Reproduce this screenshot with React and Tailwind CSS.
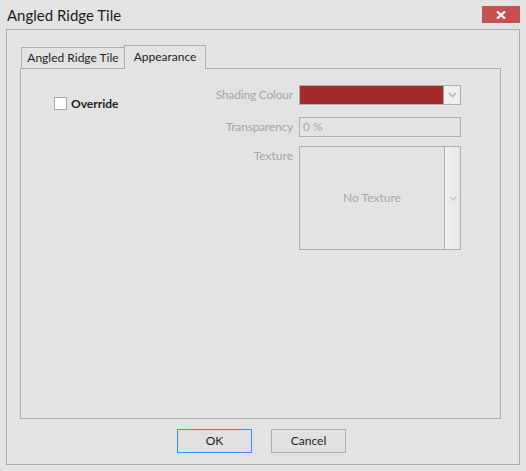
import React from "react";

const font = { fontFamily: 'Lato, "Liberation Sans", sans-serif' };

export default function App() {
  return (
    <div
      className="w-[526px] h-[471px] bg-[#e3e3e3] flex flex-col text-[12px] text-[#1e1e1e] overflow-hidden"
      style={font}
    >
      {/* title bar */}
      <div className="h-[29px] flex items-start justify-between shrink-0">
        <div className="pl-[7px] pt-[5px] text-[15px] leading-[20px] text-[#1a1a1a]">Angled Ridge Tile</div>
        <div className="mt-[6px] mr-[6px] w-[38px] h-[17px] bg-[#c75050] flex items-center justify-center">
          <svg width="10" height="8" viewBox="0 0 10 8">
            <path d="M1 0.5 L9 7.5 M9 0.5 L1 7.5" stroke="#fff" strokeWidth="2.2" />
          </svg>
        </div>
      </div>

      {/* outer frame */}
      <div className="mx-[6px] mb-[6px] flex-1 border border-[#acacac] flex flex-col pl-[13px] pr-[18px] pt-[15px] pb-[11px]">
        {/* tabs */}
        <div className="flex items-end h-[23px] relative z-10">
          <div className="ml-[1px] w-[103px] h-[21px] border border-b-0 border-r-0 border-[#acacac] flex items-center justify-center text-[12px] leading-none">
            Angled Ridge Tile
          </div>
          <div className="w-[82px] h-[24px] -mb-px border border-b-0 border-[#acacac] bg-[#e3e3e3] flex items-center justify-center text-[12px] leading-none pb-[2px]">
            Appearance
          </div>
        </div>
        {/* panel */}
        <div className="flex-1 border border-[#acacac] flex">
          <div className="w-[189px] pl-[33px] pt-[28px]">
            <div className="flex items-center gap-[4px]">
              <div className="w-[13px] h-[13px] border border-[#a8a8a8] bg-white" />
              <span className="font-bold text-[12px] leading-none text-[#222]">Override</span>
            </div>
          </div>
          <div className="pt-[16px] grid grid-cols-[83px_162px] gap-x-[6px] content-start">
            <div className="h-[20px] flex items-center justify-end text-[#a6a6a6] whitespace-nowrap tracking-[-0.2px]">Shading Colour</div>
            <div className="h-[20px] border border-[#acacac] flex">
              <div className="flex-1 bg-[#a52a2a]" />
              <div className="w-[17px] border-l border-[#acacac] bg-[#efefef] flex items-center justify-center">
                <svg width="9" height="6" viewBox="0 0 9 6">
                  <path d="M1 1 L4.5 4.5 L8 1" stroke="#b5b5b5" strokeWidth="1.6" fill="none" />
                </svg>
              </div>
            </div>

            <div className="mt-[12px] h-[20px] flex items-center justify-end text-[#a6a6a6] tracking-[-0.2px]">Transparency</div>
            <div className="mt-[12px] h-[20px] border border-[#acacac] flex items-center pl-[3px] text-[#a6a6a6]">0 %</div>

            <div className="mt-[9px] pt-[2px] flex justify-end text-[#a6a6a6] leading-[16px]">Texture</div>
            <div className="mt-[9px] h-[104px] border border-[#acacac] flex">
              <div className="flex-1 flex items-center justify-center text-[#a6a6a6]">No Texture</div>
              <div className="w-[16px] border-l border-[#acacac] bg-gradient-to-r from-[#f2f2f2] to-[#e6e6e6] flex items-center justify-center">
                <svg width="8" height="5" viewBox="0 0 8 5">
                  <path d="M1 1 L4 4 L7 1" stroke="#c0c0c0" strokeWidth="1.3" fill="none" />
                </svg>
              </div>
            </div>
          </div>
        </div>
        {/* buttons */}
        <div className="mt-[10px] flex pl-[157px] gap-[19px]">
          <button className="w-[75px] h-[24px] border border-[#3d8ee8] bg-[#e1e1e1] text-[12px] text-[#1e1e1e]">OK</button>
          <button className="w-[75px] h-[24px] border border-[#adadad] bg-[#e1e1e1] text-[12px] text-[#1e1e1e]">Cancel</button>
        </div>
      </div>
    </div>
  );
}
